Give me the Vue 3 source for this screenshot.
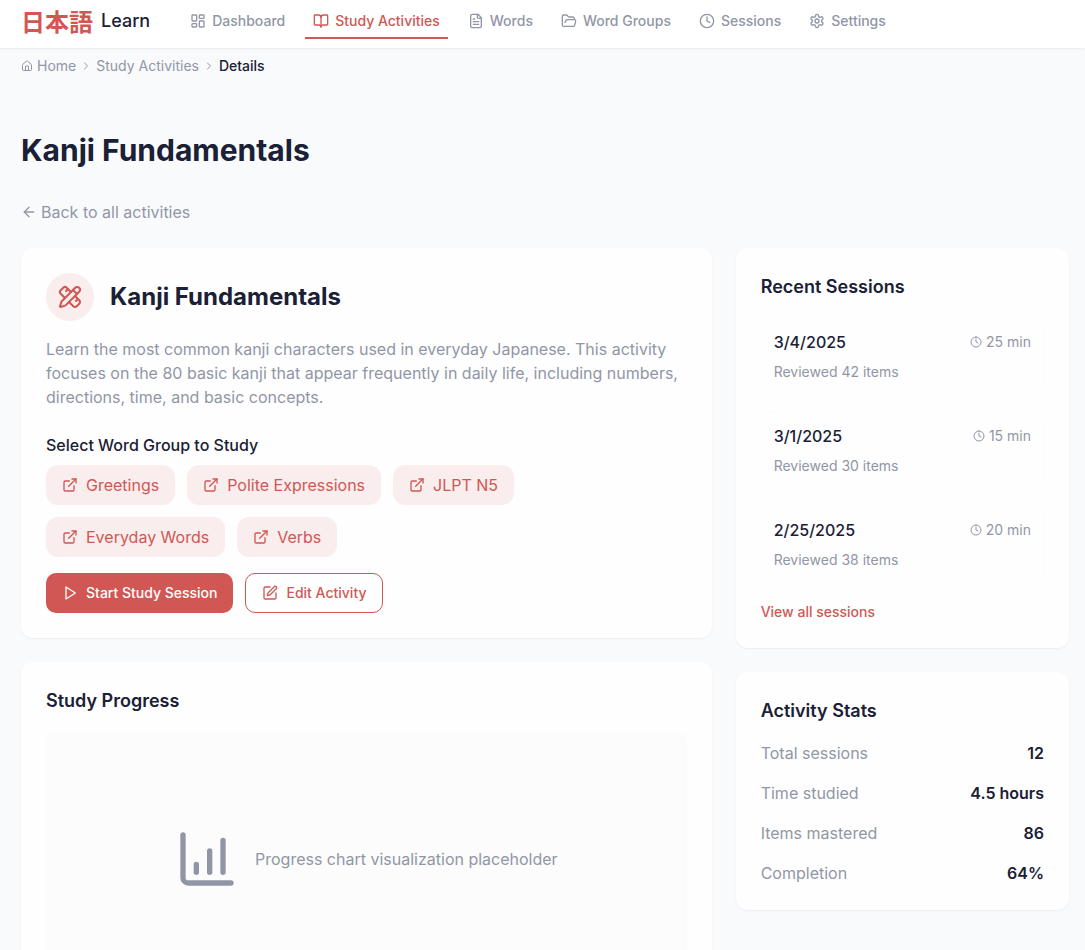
<script setup>
import { h } from 'vue'

const paths = {
  dashboard: ['M4 3h5a1 1 0 0 1 1 1v7a1 1 0 0 1-1 1H4a1 1 0 0 1-1-1V4a1 1 0 0 1 1-1z', 'M15 3h5a1 1 0 0 1 1 1v3a1 1 0 0 1-1 1h-5a1 1 0 0 1-1-1V4a1 1 0 0 1 1-1z', 'M15 12h5a1 1 0 0 1 1 1v7a1 1 0 0 1-1 1h-5a1 1 0 0 1-1-1v-7a1 1 0 0 1 1-1z', 'M4 16h5a1 1 0 0 1 1 1v3a1 1 0 0 1-1 1H4a1 1 0 0 1-1-1v-3a1 1 0 0 1 1-1z'],
  book: ['M12 7v14', 'M3 18a1 1 0 0 1-1-1V4a1 1 0 0 1 1-1h5a4 4 0 0 1 4 4 4 4 0 0 1 4-4h5a1 1 0 0 1 1 1v13a1 1 0 0 1-1 1h-6a3 3 0 0 0-3 3 3 3 0 0 0-3-3z'],
  file: ['M15 2H6a2 2 0 0 0-2 2v16a2 2 0 0 0 2 2h12a2 2 0 0 0 2-2V7Z', 'M14 2v4a2 2 0 0 0 2 2h4', 'M10 9H8', 'M16 13H8', 'M16 17H8'],
  folder: ['m6 14 1.5-2.9A2 2 0 0 1 9.24 10H20a2 2 0 0 1 1.94 2.5l-1.54 6a2 2 0 0 1-1.95 1.5H4a2 2 0 0 1-2-2V5a2 2 0 0 1 2-2h3.9a2 2 0 0 1 1.69.9l.81 1.2a2 2 0 0 0 1.67.9H18a2 2 0 0 1 2 2v2'],
  clock: ['M12 2a10 10 0 1 0 0 20 10 10 0 1 0 0-20z', 'M12 6v6l4 2'],
  settings: ['M12.22 2h-.44a2 2 0 0 0-2 2v.18a2 2 0 0 1-1 1.73l-.43.25a2 2 0 0 1-2 0l-.15-.08a2 2 0 0 0-2.73.73l-.22.38a2 2 0 0 0 .73 2.73l.15.1a2 2 0 0 1 1 1.72v.51a2 2 0 0 1-1 1.74l-.15.09a2 2 0 0 0-.73 2.73l.22.38a2 2 0 0 0 2.73.73l.15-.08a2 2 0 0 1 2 0l.43.25a2 2 0 0 1 1 1.73V20a2 2 0 0 0 2 2h.44a2 2 0 0 0 2-2v-.18a2 2 0 0 1 1-1.73l.43-.25a2 2 0 0 1 2 0l.15.08a2 2 0 0 0 2.73-.73l.22-.39a2 2 0 0 0-.73-2.73l-.15-.08a2 2 0 0 1-1-1.74v-.5a2 2 0 0 1 1-1.74l.15-.09a2 2 0 0 0 .73-2.73l-.22-.38a2 2 0 0 0-2.73-.73l-.15.08a2 2 0 0 1-2 0l-.43-.25a2 2 0 0 1-1-1.73V4a2 2 0 0 0-2-2z', 'M12 9a3 3 0 1 0 0 6 3 3 0 1 0 0-6z'],
  home: ['M15 21v-8a1 1 0 0 0-1-1h-4a1 1 0 0 0-1 1v8', 'M3 10a2 2 0 0 1 .709-1.528l7-5.999a2 2 0 0 1 2.582 0l7 5.999A2 2 0 0 1 21 10v9a2 2 0 0 1-2 2H5a2 2 0 0 1-2-2z'],
  chevron: ['m9 18 6-6-6-6'],
  back: ['m12 19-7-7 7-7', 'M19 12H5'],
  craft: ['M13 7 8.7 2.7a2.41 2.41 0 0 0-3.4 0L2.7 5.3a2.41 2.41 0 0 0 0 3.4L7 13', 'm8 6 2-2', 'm18 16 2-2', 'm17 11 4.3 4.3c.94.94.94 2.46 0 3.4l-2.6 2.6c-.94.94-2.46.94-3.4 0L11 17', 'M21.174 6.812a1 1 0 0 0-3.986-3.987L3.842 16.174a2 2 0 0 0-.5.83l-1.321 4.352a.5.5 0 0 0 .623.622l4.353-1.32a2 2 0 0 0 .83-.497z', 'm15 5 4 4'],
  external: ['M15 3h6v6', 'M10 14 21 3', 'M18 13v6a2 2 0 0 1-2 2H5a2 2 0 0 1-2-2V8a2 2 0 0 1 2-2h6'],
  play: ['M6 3 20 12 6 21z'],
  edit: ['M12 3H5a2 2 0 0 0-2 2v14a2 2 0 0 0 2 2h14a2 2 0 0 0 2-2v-7', 'M18.375 2.625a1 1 0 0 1 3 3l-9.013 9.014a2 2 0 0 1-.853.505l-2.873.84a.5.5 0 0 1-.62-.62l.84-2.873a2 2 0 0 1 .506-.852z'],
  chart: ['M3 3v16a2 2 0 0 0 2 2h16', 'M18 17V5', 'M13 17V9', 'M8 17v-3'],
}

const Icon = (props) =>
  h('svg', {
    width: props.size, height: props.size, viewBox: '0 0 24 24', fill: 'none', stroke: 'currentColor',
    'stroke-width': 2, 'stroke-linecap': 'round', 'stroke-linejoin': 'round', 'aria-hidden': 'true',
  }, paths[props.name].map((d) => h('path', { d })))
Icon.props = ['name', 'size']

const nav = [
  { label: 'Dashboard', icon: 'dashboard' },
  { label: 'Study Activities', icon: 'book', active: true },
  { label: 'Words', icon: 'file' },
  { label: 'Word Groups', icon: 'folder' },
  { label: 'Sessions', icon: 'clock' },
  { label: 'Settings', icon: 'settings' },
]
const groups = ['Greetings', 'Polite Expressions', 'JLPT N5', 'Everyday Words', 'Verbs']
const sessions = [
  { date: '3/4/2025', minutes: 25, items: 42 },
  { date: '3/1/2025', minutes: 15, items: 30 },
  { date: '2/25/2025', minutes: 20, items: 38 },
]
const stats = [
  ['Total sessions', '12'],
  ['Time studied', '4.5 hours'],
  ['Items mastered', '86'],
  ['Completion', '64%'],
]
</script>

<template>
  <div class="page">
    <header class="topbar">
      <a class="brand"><span class="brand-jp">日本語</span><span class="brand-en">Learn</span></a>
      <nav class="nav">
        <a v-for="n in nav" :key="n.label" class="nav-item" :class="{ active: n.active }">
          <Icon :name="n.icon" size="16" /><span>{{ n.label }}</span>
        </a>
      </nav>
    </header>

    <main class="content">
      <div class="crumbs">
        <a class="crumb"><Icon name="home" size="12" /><span>Home</span></a>
        <Icon name="chevron" size="12" />
        <a>Study Activities</a>
        <Icon name="chevron" size="12" />
        <span class="current">Details</span>
      </div>

      <h1>Kanji Fundamentals</h1>
      <a class="back"><Icon name="back" size="16" /><span>Back to all activities</span></a>

      <div class="grid">
        <div class="main-col">
          <section class="card">
            <div class="heading">
              <div class="badge"><Icon name="craft" size="24" /></div>
              <h2>Kanji Fundamentals</h2>
            </div>
            <p class="desc">Learn the most common kanji characters used in everyday Japanese. This activity focuses on the 80 basic kanji that appear frequently in daily life, including numbers, directions, time, and basic concepts.</p>
            <h3 class="label">Select Word Group to Study</h3>
            <div class="chips">
              <a v-for="g in groups" :key="g" class="chip"><Icon name="external" size="16" /><span>{{ g }}</span></a>
            </div>
            <div class="actions">
              <button class="btn primary"><Icon name="play" size="16" /><span>Start Study Session</span></button>
              <button class="btn outline"><Icon name="edit" size="16" /><span>Edit Activity</span></button>
            </div>
          </section>

          <section class="card">
            <h3 class="title">Study Progress</h3>
            <div class="chart">
              <Icon name="chart" size="64" /><span>Progress chart visualization placeholder</span>
            </div>
          </section>
        </div>

        <aside class="side-col">
          <section class="card">
            <h3 class="title">Recent Sessions</h3>
            <div class="sessions">
              <div v-for="s in sessions" :key="s.date" class="session">
                <div class="session-top">
                  <span class="date">{{ s.date }}</span>
                  <span class="time"><Icon name="clock" size="12" />{{ s.minutes }} min</span>
                </div>
                <div class="reviewed">Reviewed {{ s.items }} items</div>
              </div>
            </div>
            <a class="view-all">View all sessions</a>
          </section>

          <section class="card">
            <h3 class="title">Activity Stats</h3>
            <div class="stats">
              <div v-for="[k, v] in stats" :key="k" class="stat"><span>{{ k }}</span><b>{{ v }}</b></div>
            </div>
          </section>
        </aside>
      </div>
    </main>
  </div>
</template>

<style>
body {
  margin: 0;
  overflow: hidden;
}
</style>

<style scoped>
.page {
  height: 950px;
  overflow: hidden;
  background: #f9fafc;
  color: #1a2035;
  font: 400 16px/24px Inter, "Noto Sans CJK JP", sans-serif;
}
.page * {
  box-sizing: border-box;
}
svg {
  display: block;
  flex: none;
}
h1, h2, h3, p {
  margin: 0;
}
.topbar {
  display: flex;
  height: 48px;
  padding-left: 21px;
  background: #fff;
  box-shadow: 0 1px 2px rgba(20, 30, 50, 0.07);
}
.brand {
  display: flex;
  align-items: center;
  gap: 8px;
  height: 42px;
}
.brand-jp {
  color: #d15754;
  font: 700 24px/32px "Noto Sans CJK JP", sans-serif;
}
.brand-en {
  font-size: 18px;
  font-weight: 500;
}
.nav {
  display: flex;
  gap: 12px;
  margin-left: 32px;
  height: 39px;
}
.nav-item {
  display: flex;
  align-items: center;
  gap: 6px;
  padding: 5px 8px 0;
  border-bottom: 2px solid transparent;
  color: #9196a6;
  font-size: 14px;
  font-weight: 500;
  line-height: 20px;
}
.nav-item.active {
  color: #d15754;
  border-color: #d15754;
}
.content {
  padding: 8px 16px 0 21px;
}
.crumbs {
  display: flex;
  align-items: center;
  gap: 4px;
  color: #9196a6;
  font-size: 14px;
  line-height: 20px;
}
.crumb {
  display: flex;
  align-items: center;
  gap: 4px;
}
.current {
  color: #1a2035;
  font-weight: 500;
}
h1 {
  margin-top: 56px;
  font-size: 30px;
  font-weight: 700;
  line-height: 36px;
}
.back {
  display: flex;
  align-items: center;
  gap: 4px;
  margin-top: 32px;
  color: #9196a6;
}
.grid {
  display: grid;
  grid-template-columns: repeat(3, 1fr);
  align-items: start;
  gap: 24px;
  margin-top: 24px;
}
.main-col {
  grid-column: span 2;
}
.main-col, .side-col {
  display: flex;
  flex-direction: column;
  gap: 24px;
}
.card {
  padding: 25px;
  border-radius: 12px;
  background: #fefefe;
  box-shadow: 0 1px 2px rgba(20, 30, 50, 0.06);
}
.heading {
  display: flex;
  align-items: center;
  gap: 16px;
}
.badge {
  display: grid;
  place-items: center;
  width: 48px;
  height: 48px;
  border-radius: 50%;
  background: #f9eded;
  color: #d15754;
}
h2 {
  font-size: 24px;
  font-weight: 700;
  line-height: 32px;
}
.desc {
  margin-top: 16px;
  color: #9196a6;
}
.label {
  margin-top: 24px;
  font-size: 16px;
  font-weight: 500;
}
.chips {
  display: flex;
  flex-wrap: wrap;
  gap: 12px;
  margin-top: 8px;
}
.chip {
  display: flex;
  align-items: center;
  gap: 8px;
  height: 40px;
  padding: 0 16px;
  border-radius: 12px;
  background: #f9eded;
  color: #d15754;
}
.actions {
  display: flex;
  gap: 12px;
  margin-top: 16px;
}
.btn {
  display: flex;
  align-items: center;
  gap: 8px;
  height: 40px;
  padding: 0 16px;
  border: 0;
  border-radius: 10px;
  font: 500 14px/20px Inter, sans-serif;
}
.primary {
  padding-right: 15.5px;
  background: #d15754;
  color: #fff;
}
.outline {
  gap: 8.5px;
  padding-right: 15.5px;
  border: 1px solid #d15754;
  background: #fefefe;
  color: #d15754;
}
.title {
  font-size: 18px;
  font-weight: 600;
  line-height: 28px;
}
.chart {
  display: flex;
  align-items: center;
  justify-content: center;
  gap: 16px;
  height: 256px;
  margin-top: 16px;
  border-radius: 12px;
  background: #fcfcfc;
  color: #9196a6;
}
.sessions {
  display: flex;
  flex-direction: column;
  gap: 16px;
  margin-top: 16px;
}
.session {
  padding: 12px;
  border: 1px solid #fcfcfc;
  border-radius: 12px;
}
.session-top {
  display: flex;
  align-items: center;
  justify-content: space-between;
}
.date {
  font-weight: 500;
}
.time {
  display: flex;
  align-items: center;
  gap: 4px;
  color: #9196a6;
  font-size: 14px;
}
.reviewed {
  margin-top: 8px;
  color: #9196a6;
  font-size: 14px;
  line-height: 20px;
}
.view-all {
  display: block;
  margin-top: 17px;
  color: #d15754;
  font-size: 14px;
  font-weight: 500;
  line-height: 23px;
}
.stats {
  display: flex;
  flex-direction: column;
  gap: 16px;
  margin-top: 16px;
}
.stat {
  display: flex;
  justify-content: space-between;
  color: #9196a6;
}
.stat b {
  color: #1a2035;
  font-weight: 600;
}
</style>
